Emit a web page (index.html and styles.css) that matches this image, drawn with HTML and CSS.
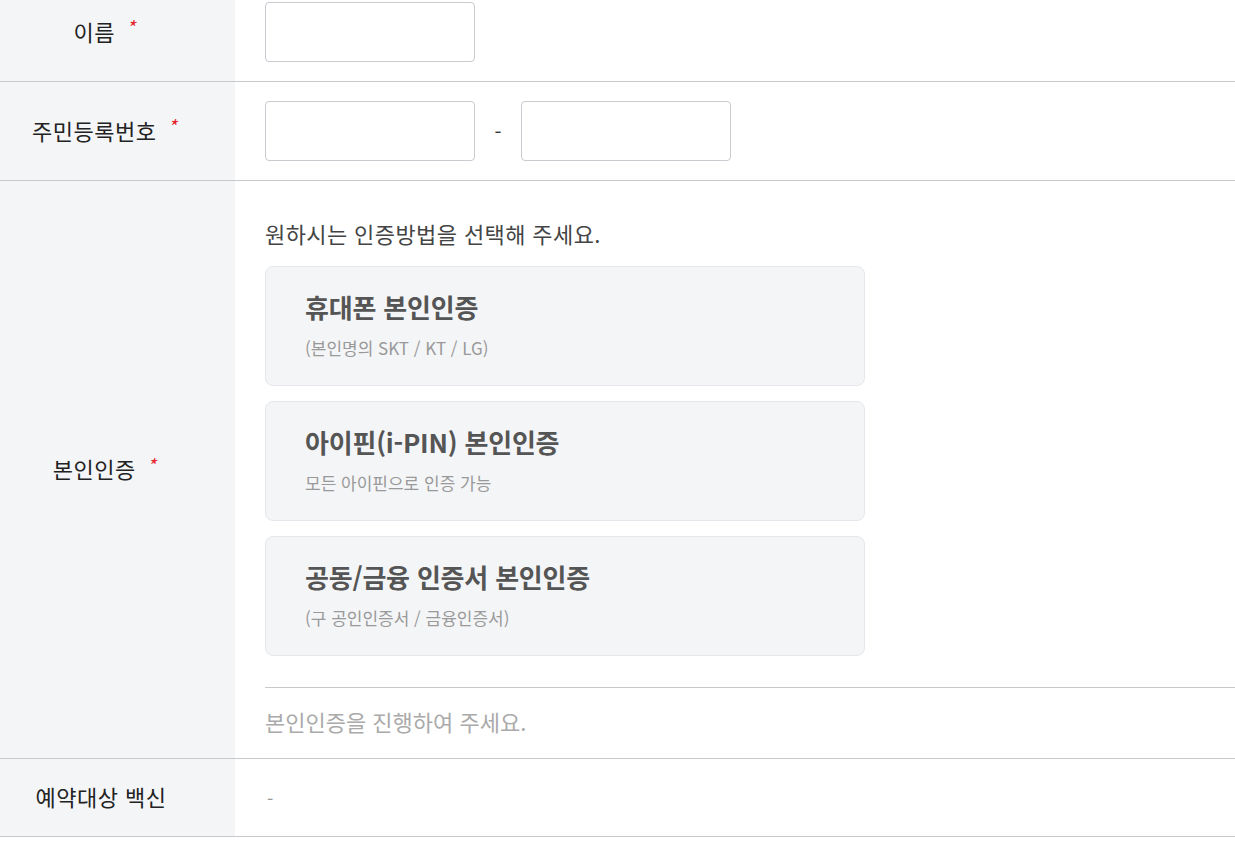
FILE: index.html
```html
<!DOCTYPE html>
<html lang="ko">
<head>
<meta charset="utf-8">
<title>본인인증</title>
<link rel="stylesheet" href="styles.css">
</head>
<body>
<div class="form">
  <div class="row row-name">
    <div class="label"><span>이름</span><span class="req">*</span></div>
    <div class="field field-inputs">
      <input class="box" type="text">
    </div>
  </div>
  <div class="row">
    <div class="label"><span>주민등록번호</span><span class="req">*</span></div>
    <div class="field field-inputs">
      <input class="box" type="text">
      <span class="dash">-</span>
      <input class="box" type="password">
    </div>
  </div>
  <div class="row">
    <div class="label"><span>본인인증</span><span class="req">*</span></div>
    <div class="field field-auth">
      <p class="intro">원하시는 인증방법을 선택해 주세요.</p>
      <div class="cards">
        <div class="card">
          <div class="card-title">휴대폰 본인인증</div>
          <div class="card-sub">(본인명의 SKT / KT / LG)</div>
        </div>
        <div class="card">
          <div class="card-title">아이핀(i-PIN) 본인인증</div>
          <div class="card-sub">모든 아이핀으로 인증 가능</div>
        </div>
        <div class="card">
          <div class="card-title">공동/금융 인증서 본인인증</div>
          <div class="card-sub">(구 공인인증서 / 금융인증서)</div>
        </div>
      </div>
      <div class="status">본인인증을 진행하여 주세요.</div>
    </div>
  </div>
  <div class="row row-vaccine">
    <div class="label"><span>예약대상 백신</span></div>
    <div class="field field-text">
      <span class="none">-</span>
    </div>
  </div>
</div>
</body>
</html>
```
FILE: styles.css
```css
* { box-sizing: border-box; }
html, body {
  margin: 0;
  padding: 0;
  background: #ffffff;
}
body {
  font-family: "Noto Sans CJK KR", "Noto Sans", sans-serif;
  color: #222;
  overflow: hidden;
}
.form {
  margin-top: -17px;
  width: 1235px;
}
.row {
  display: flex;
  border-bottom: 1px solid #c8c9cd;
}
.label {
  width: 235px;
  flex: none;
  background: #f4f5f7;
  display: flex;
  align-items: center;
  justify-content: center;
  padding-right: 26px;
  padding-bottom: 3px;
  font-size: 22px;
  color: #222;
  letter-spacing: 0.5px;
}
.req {
  color: #e4202b;
  font-style: italic;
  font-size: 19px;
  margin-left: 11px;
  position: relative;
  top: -4px;
}
.field {
  flex: 1;
  padding-left: 30px;
}
.field-inputs {
  display: flex;
  align-items: center;
  padding-top: 19px;
  padding-bottom: 19px;
}
.box {
  width: 210px;
  height: 60px;
  border: 1px solid #c9cad0;
  border-radius: 4px;
  background: #fff;
  margin: 0;
  padding: 0 12px;
  font-size: 18px;
}
.dash {
  width: 46px;
  text-align: center;
  font-size: 20px;
  color: #333;
}
.field-auth {
  padding-top: 37px;
}
.intro {
  margin: 0;
  font-size: 22px;
  line-height: 30px;
  color: #444;
  letter-spacing: 0.4px;
}
.cards {
  margin-top: 18px;
  display: flex;
  flex-direction: column;
  gap: 15px;
  width: 600px;
}
.card {
  height: 120px;
  background: #f4f5f7;
  border: 1px solid #e5e7ec;
  border-radius: 8px;
  padding: 23px 0 0 39px;
}
.card-title {
  font-size: 26px;
  line-height: 34px;
  font-weight: 700;
  color: #555;
  letter-spacing: -0.2px;
}
.card-sub {
  margin-top: 12px;
  font-size: 17px;
  line-height: 24px;
  color: #999;
  letter-spacing: 0;
}
.status {
  margin-top: 31px;
  border-top: 1px solid #c8c9cd;
  padding: 18px 0 22px;
  font-size: 22px;
  line-height: 30px;
  color: #aaa;
  letter-spacing: 0;
}
.row-vaccine .label {
  padding-right: 33px;
}
.field-text {
  display: flex;
  align-items: center;
  height: 77px;
  padding-left: 32px;
}
.none {
  color: #999;
  font-size: 18px;
}
```
